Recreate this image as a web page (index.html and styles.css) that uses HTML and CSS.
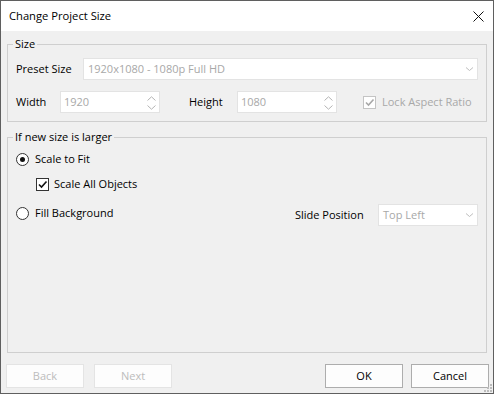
FILE: index.html
```html
<!DOCTYPE html>
<html lang="en">
<head>
<meta charset="utf-8">
<title>Change Project Size</title>
<link rel="stylesheet" href="styles.css">
</head>
<body>
<div class="window">
  <header class="titlebar">
    <span class="title">Change Project Size</span>
    <span class="close" aria-label="Close">
      <svg width="11" height="11" viewBox="0 0 11 11"><path d="M0.5 0.5 L10.5 10.5 M10.5 0.5 L0.5 10.5" stroke="#111" stroke-width="1" fill="none"/></svg>
    </span>
  </header>
  <main class="client">
    <fieldset class="group group-size">
      <legend>Size</legend>
      <div class="group-body">
        <div class="row row-preset">
          <span class="label label-preset">Preset Size</span>
          <div class="combo combo-preset">
            <span class="field-text">1920x1080 - 1080p Full HD</span>
            <svg class="chev" width="7" height="4" viewBox="0 0 7 4"><path d="M0 0.5 L3.5 3.5 L7 0.5" stroke="#bdbdbd" stroke-width="1" fill="none"/></svg>
          </div>
        </div>
        <div class="row row-dims">
          <span class="label label-width">Width</span>
          <div class="spin">
            <span class="field-text">1920</span>
            <span class="spin-arrows">
              <svg width="9" height="5" viewBox="0 0 9 5"><path d="M0.5 4.5 L4.5 0.8 L8.5 4.5" stroke="#b4b4b4" stroke-width="1" fill="none"/></svg>
              <svg width="9" height="5" viewBox="0 0 9 5"><path d="M0.5 0.5 L4.5 4.2 L8.5 0.5" stroke="#b4b4b4" stroke-width="1" fill="none"/></svg>
            </span>
          </div>
          <span class="label label-height">Height</span>
          <div class="spin">
            <span class="field-text">1080</span>
            <span class="spin-arrows">
              <svg width="9" height="5" viewBox="0 0 9 5"><path d="M0.5 4.5 L4.5 0.8 L8.5 4.5" stroke="#b4b4b4" stroke-width="1" fill="none"/></svg>
              <svg width="9" height="5" viewBox="0 0 9 5"><path d="M0.5 0.5 L4.5 4.2 L8.5 0.5" stroke="#b4b4b4" stroke-width="1" fill="none"/></svg>
            </span>
          </div>
          <span class="option option-lock">
            <span class="box box-disabled">
              <svg width="11" height="11" viewBox="0 0 11 11"><path d="M2 5.5 L4.5 8 L9.5 2.5" stroke="#a8a8a8" stroke-width="1.6" fill="none"/></svg>
            </span>
            <span class="text-disabled">Lock Aspect Ratio</span>
          </span>
        </div>
      </div>
    </fieldset>

    <fieldset class="group group-larger">
      <legend>If new size is larger</legend>
      <div class="group-body">
        <div class="row row-fit">
          <span class="option">
            <span class="radio radio-on"><span class="dot"></span></span>
            <span>Scale to Fit</span>
          </span>
        </div>
        <div class="row row-objects">
          <span class="option option-indent">
            <span class="box">
              <svg width="11" height="11" viewBox="0 0 11 11"><path d="M2 5.5 L4.5 8 L9.5 2.5" stroke="#111" stroke-width="1.6" fill="none"/></svg>
            </span>
            <span>Scale All Objects</span>
          </span>
        </div>
        <div class="row row-fill">
          <span class="option option-fill">
            <span class="radio"></span>
            <span>Fill Background</span>
          </span>
          <div class="slide-group">
            <span class="label">Slide Position</span>
            <div class="combo combo-slide">
              <span class="field-text">Top Left</span>
              <svg class="chev" width="7" height="4" viewBox="0 0 7 4"><path d="M0 0.5 L3.5 3.5 L7 0.5" stroke="#bdbdbd" stroke-width="1" fill="none"/></svg>
            </div>
          </div>
        </div>
      </div>
    </fieldset>

    <div class="buttons">
      <div class="btn-group btn-group-nav">
        <span class="btn btn-disabled">Back</span>
        <span class="btn btn-disabled">Next</span>
      </div>
      <div class="btn-group btn-group-main">
        <span class="btn">OK</span>
        <span class="btn">Cancel</span>
      </div>
    </div>
  </main>
  <svg class="grip" width="9" height="9" viewBox="0 0 9 9">
    <rect x="7" y="1" width="2" height="2" fill="#bcbcbc"/>
    <rect x="4" y="4" width="2" height="2" fill="#bcbcbc"/>
    <rect x="7" y="4" width="2" height="2" fill="#bcbcbc"/>
    <rect x="1" y="7" width="2" height="2" fill="#bcbcbc"/>
    <rect x="4" y="7" width="2" height="2" fill="#bcbcbc"/>
    <rect x="7" y="7" width="2" height="2" fill="#bcbcbc"/>
  </svg>
</div>
</body>
</html>
```

FILE: styles.css
```css
* {
  box-sizing: border-box;
}

html,
body {
  margin: 0;
  padding: 0;
}

body {
  width: 495px;
  height: 395px;
  background: #ffffff;
  font-family: "Open Sans", "Noto Sans", sans-serif;
  font-size: 11px;
  line-height: 16px;
  color: #000000;
}

.window {
  position: relative;
  width: 494px;
  height: 394px;
  border: 1px solid #5f5f5f;
  background: #f0f0f0;
  display: flex;
  flex-direction: column;
}

.titlebar {
  flex: none;
  height: 30px;
  background: #ffffff;
  display: flex;
  align-items: center;
  justify-content: space-between;
  padding: 0 9px 0 8px;
}

.title {
  font-size: 11.2px;
  color: #000000;
}

.close {
  display: flex;
  width: 11px;
  height: 11px;
}

.client {
  flex: 1;
  display: flex;
  flex-direction: column;
  padding: 5px 6px 5px 6px;
  min-height: 0;
}

.group {
  margin: 0;
  padding: 0;
  border: 1px solid #cfcfcf;
  min-width: 0;
}

.group legend {
  margin-left: 5px;
  padding: 0 2px;
  height: 16px;
  line-height: 16px;
}

.group-body {
  padding: 0 8px;
}

.group-size .group-body {
  padding-bottom: 8px;
}

.group-larger {
  flex: 1;
  margin-top: 7px;
}

.row {
  display: flex;
  align-items: center;
}

.row-preset {
  margin-top: 6px;
  height: 22px;
}

.row-dims {
  margin-top: 11px;
  height: 22px;
}

.label {
  flex: none;
  white-space: nowrap;
}

.label-preset {
  width: 67px;
}

.label-width {
  width: 44px;
}

.label-height {
  width: 48px;
  margin-left: 29px;
}

.combo,
.spin {
  flex: none;
  height: 22px;
  background: #ffffff;
  border: 1px solid #e3e3e3;
  display: flex;
  align-items: center;
  justify-content: space-between;
  color: #a8a8a8;
}

.combo-preset {
  width: 395px;
  padding: 0 4px 0 4px;
}

.combo-slide {
  width: 100px;
  padding: 0 4px 0 4px;
}

.spin {
  width: 100px;
  padding: 0 3px 0 3px;
}

.spin-arrows {
  display: flex;
  flex-direction: column;
  gap: 4px;
  margin-top: 1px;
}

.spin-arrows svg,
.chev {
  display: block;
}

.option {
  display: flex;
  align-items: center;
  white-space: nowrap;
}

.option-lock {
  margin-left: 26px;
}

.text-disabled {
  color: #a8a8a8;
}

.box {
  flex: none;
  width: 13px;
  height: 13px;
  border: 1px solid #333333;
  background: #ffffff;
  display: flex;
  align-items: center;
  justify-content: center;
  margin-right: 6px;
}

.box-disabled {
  border-color: #c4c4c4;
}

.radio {
  flex: none;
  width: 13px;
  height: 13px;
  border: 1px solid #333333;
  border-radius: 50%;
  background: #ffffff;
  display: flex;
  align-items: center;
  justify-content: center;
  margin-right: 6px;
}

.dot {
  width: 5px;
  height: 5px;
  border-radius: 50%;
  background: #111111;
}

.row-fit {
  margin-top: 6px;
  height: 16px;
}

.row-objects {
  margin-top: 9px;
  height: 16px;
}

.option-indent {
  margin-left: 20px;
}

.option-indent .box {
  margin-right: 5px;
}

.row-fill {
  margin-top: 12px;
  height: 22px;
  justify-content: space-between;
}

.option-fill {
  align-self: flex-start;
  margin-top: 1px;
}

.slide-group {
  width: 183px;
  display: flex;
  align-items: center;
  justify-content: space-between;
}

.buttons {
  flex: none;
  display: flex;
  justify-content: space-between;
  margin: 11px -2px 0 -1px;
}

.btn-group {
  display: flex;
}

.btn-group-nav {
  gap: 10px;
}

.btn-group-main {
  gap: 8px;
}

.btn {
  width: 78px;
  height: 24px;
  display: flex;
  align-items: center;
  justify-content: center;
  background: #fdfdfd;
  border: 1px solid #adadad;
  color: #000000;
}

.btn-disabled {
  border-color: #e4e4e4;
  color: #bcbcbc;
}

.grip {
  position: absolute;
  right: 1px;
  bottom: 1px;
}
```
